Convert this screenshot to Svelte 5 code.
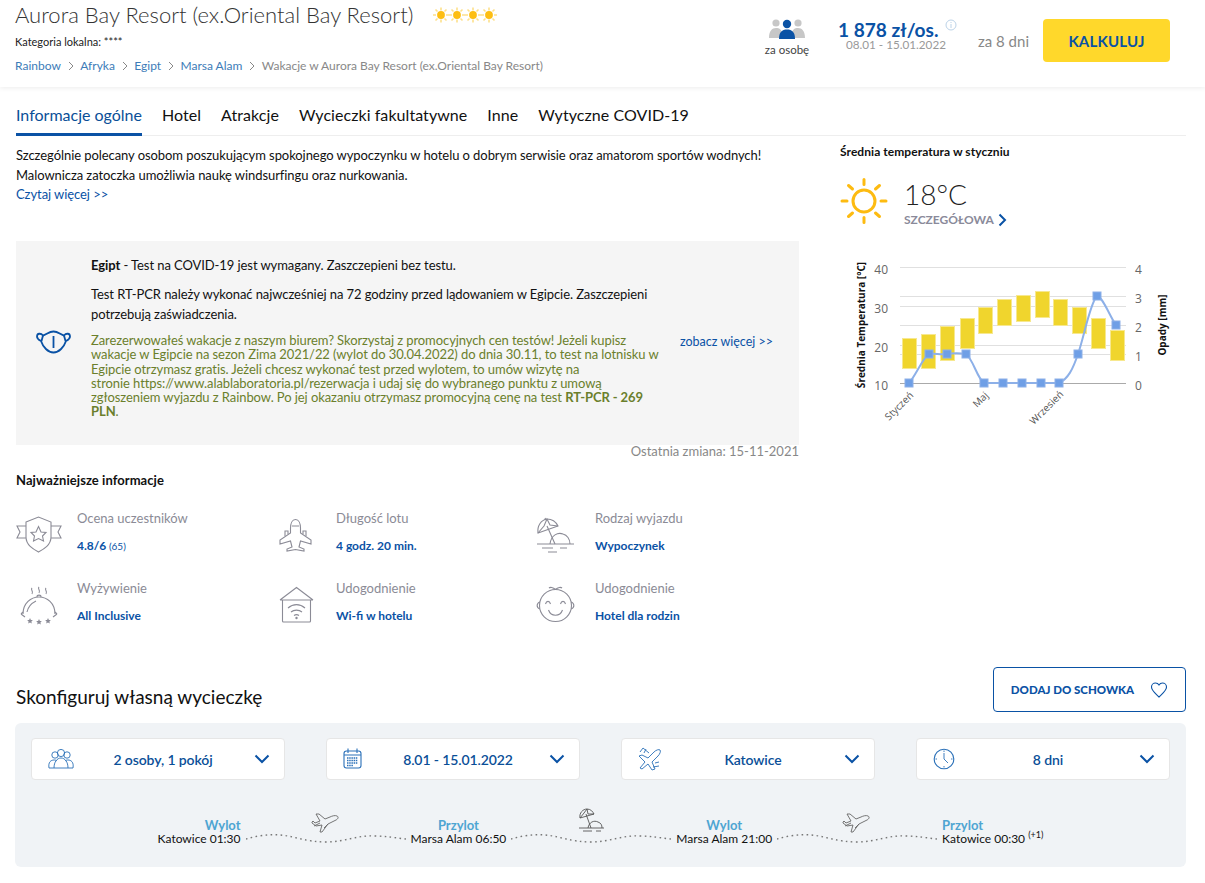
<script>
    const tabs = ['Informacje ogólne', 'Hotel', 'Atrakcje', 'Wycieczki fakultatywne', 'Inne', 'Wytyczne COVID-19'];
    const crumbs = ['Rainbow', 'Afryka', 'Egipt', 'Marsa Alam'];

    const info = [
        { icon: 'shield', label: 'Ocena uczestników', value: '4.8/6', extra: '(65)' },
        { icon: 'plane', label: 'Długość lotu', value: '4 godz. 20 min.' },
        { icon: 'beach', label: 'Rodzaj wyjazdu', value: 'Wypoczynek' },
        { icon: 'food', label: 'Wyżywienie', value: 'All Inclusive' },
        { icon: 'wifi', label: 'Udogodnienie', value: 'Wi-fi w hotelu' },
        { icon: 'baby', label: 'Udogodnienie', value: 'Hotel dla rodzin' }
    ];

    const selects = [
        { icon: 'people', label: '2 osoby, 1 pokój' },
        { icon: 'calendar', label: '8.01 - 15.01.2022' },
        { icon: 'jet', label: 'Katowice' },
        { icon: 'clock', label: '8 dni' }
    ];

    // chart, in px of the svg
    const bars = [
        [62, 87, 117], [81, 83, 117], [100, 75, 109], [120, 67, 97], [138, 56, 82], [157, 48, 74],
        [176, 44, 70], [195, 40, 66], [213, 48, 74], [232, 56, 82], [251, 67, 97], [270, 79, 109]
    ];
    const rain = [
        [69, 132], [89, 103], [107, 103], [126, 103], [144, 132], [163, 132],
        [182, 132], [201, 132], [219, 132], [238, 103], [257, 45], [276, 74]
    ];
    const rainLine = 'M69 132 C76 124 82 108 89 103 C95 102 100 104 107 103 C113 102 120 102 126 103 C133 108 137 127 144 132 L219 132 C228 128 233 118 238 103 C244 86 250 52 257 45 C263 46 270 66 276 74';
</script>

{#snippet sun()}
    <svg class="star" viewBox="0 0 16 16" width="16" height="16">
        <path d="M8 .5v3M8 12.500v3M0 8h3M13 8h3M2.500 2.500l2 2M11.500 11.500l2 2M2.500 13.500l2-2M11.500 4.500l2-2" stroke="#fde08a" stroke-width="1.600" />
        <circle cx="8" cy="8" r="3.900" fill="#fdbe12" />
    </svg>
{/snippet}

{#snippet infoIcon(name)}
    <svg class="info-icon" viewBox="0 0 46 40" width="46" height="40" fill="none" stroke="#8b8b96" stroke-width="1.100">
        {#if name === 'shield'}
            <path d="M10 6 L22.500 1 L35 6 V21 C35 29 28 33 22.500 36 C17 33 10 29 10 21 Z" />
            <path d="M10 10 H1 L4 16 L1 22 L10 22 M35 10 H45 L42 16 L45 22 L35 22" />
            <path d="M22.500 10.500 L25 16 L30 16.500 L26.500 20 L27.500 25 L22.500 22.500 L17.500 25 L18.500 20 L15 16.500 L20 16 Z" />
        {:else if name === 'plane'}
            <path d="M20.500 3.500 C17 3.500 15.500 8 15.500 12 V17 L5 24 V28 L15.500 25 L17 31 L12 33 V35 L20.500 33.500 L29 35 V33 L24 31 L25.500 25 L36 28 V24 L25.500 17 V12 C25.500 8 24 3.500 20.500 3.500 Z" />
            <path d="M10 20 V15 H13 V18 M31 20 V15 H28 V18 M17 10 H24" />
        {:else if name === 'beach'}
            <path d="M3 28 H40 M8 32 H19 M26 32 H33 M14 36 H23" />
            <path d="M16 28 C17 19 24 16 29 18 C33 19 36 23 36 28" />
            <path d="M4 17 C3 10 7 4 13 3 C18 3 22 6 24 10 Z" />
            <path d="M4 17 L10 10 L13 3 L16 9 L24 10 M13 10 L21 28 M11 2 L12 4" />
        {:else if name === 'food'}
            <path d="M7 28 C7 17 15 11 23 11 C31 11 39 17 39 28" />
            <path d="M11 26 C12 21 16 17 20 15" />
            <path d="M21 11 C21 8.500 25 8.500 25 11 M5 28 L9 31 M5 28 L7 26 M41 28 L37 31 M41 28 L39 26" />
            <path d="M16 2 C14 4 18 5 16 8 M23 1 C21 3 25 4 23 7 M30 2 C28 4 32 5 30 8" />
            <g fill="#8b8b96" stroke="none">
                {#each [[14, 32], [23, 33], [32, 32]] as [x, y]}
                    <path d="M{x} {y}l.9 1.900 2 .2-1.500 1.400.4 2-1.800-1-1.800 1 .4-2-1.500-1.400 2-.2z" />
                {/each}
            </g>
        {:else if name === 'wifi'}
            <path d="M5 14 L21.500 1.500 L38 14 M5 14 H38" />
            <path d="M7.500 14 V35 C7.500 36 7.500 36 8.500 36 H34.500 C35.500 36 35.500 36 35.500 35 V14" />
            <path d="M13 22 C18 17.500 25 17.500 30 22 M16 26 C19 23.500 24 23.500 27 26 M19 29.500 C20.500 28.500 22.500 28.500 24 29.500" />
            <circle cx="21.500" cy="32" r="1.200" fill="#8b8b96" stroke="none" />
        {:else if name === 'baby'}
            <circle cx="21.500" cy="19.500" r="16" />
            <path d="M6 16 C2.500 17 2 21.500 5.800 23 M37 16 C40.500 17 41 21.500 37.200 23" />
            <path d="M21.500 3.500 C19 1 16 1 15 2 M21.500 3.500 C24 1 27 1 28 2" />
            <path d="M11.500 18 C12.500 14.500 15.500 14.500 16.500 18 M26.500 18 C27.500 14.500 30.500 14.500 31.500 18 M14.500 24 C17 31 26 31 28.500 24" />
        {/if}
    </svg>
{/snippet}

{#snippet selectIcon(name)}
    <svg class="select-icon" viewBox="0 0 28 24" width="28" height="24" fill="none" stroke="#2a70b8" stroke-width=".9">
        {#if name === 'people'}
            <circle cx="8" cy="8" r="3.200" /><circle cx="14" cy="6" r="3.600" /><circle cx="20" cy="8" r="3.200" />
            <path d="M2 21 C1 15 4 13 7 13 C8 13 9 13 10 14 M26 21 C27 15 24 13 21 13 C20 13 19 13 18 14" />
            <path d="M7 21 C7 15 10 11 14 11 C18 11 21 15 21 21 Z M2 21 H7 M21 21 H26" />
        {:else if name === 'calendar'}
            <rect x="2" y="4" width="17" height="17" rx="2.500" stroke-width="1.100" />
            <path d="M6 1.500 V6 M15 1.500 V6 M2 8 H19" stroke-width="1.100" />
            <path d="M5 11 H16 M5 13.500 H16 M5 16 H16 M5 18.500 H11" stroke-dasharray="1.500 .7" stroke-width="1.500" />
        {:else if name === 'jet'}
            <path d="M3 21 L8 15 L2 9 L5 8 L11 11 L17 5 C19 3 22 2 23 3 C24 4 23 7 21 9 L15 15 L18 22 L15 23 L11 17 L5 22 Z" />
            <path d="M7 6 L9 2 M3 5 L6 1 L12 6 M18 16 L22 15 M16 20 L22 19" />
        {:else if name === 'clock'}
            <circle cx="12" cy="12" r="9.800" stroke-width="1.100" />
            <path d="M12 6 V12 L16 16" />
            <path d="M12 3.500 V5 M12 19 V20.500 M3.500 12 H5 M19 12 H20.500" />
        {/if}
    </svg>
{/snippet}

{#snippet grayPlane()}
    <svg class="route-icon" viewBox="0 0 28 22" width="28" height="22" fill="none" stroke="#666" stroke-width=".9">
        <path d="M1 11 L5 14 L11 13 L9 20 L11 20 L17 12 L25 8 C27 7 28 5 26 4 C24 3 21 4 19 5 L14 7 L8 2 L5 2 L9 9 L4 11 L2 9 L1 10 Z" />
        <path d="M3 14 L9 11 M13 16 L17 12" />
    </svg>
{/snippet}

{#snippet wave()}
    <svg class="wave" viewBox="0 0 160 12" width="160" height="12" fill="none" stroke="#777" stroke-width="1.400" stroke-dasharray="1.600 3.400">
        <path d="M0 7 C10 4 22 2 34 3 C48 4 60 10 80 10 C98 10 112 3 128 4 C140 4 150 6 160 7" />
    </svg>
{/snippet}

{#snippet stop(title, place, align)}
    <div class="stop {align}">
        <b>{title}</b>
        <span>{place}</span>
    </div>
{/snippet}

<header class="top">
    <div class="top-left">
        <div class="title-row">
            <h1>Aurora Bay Resort (ex.Oriental Bay Resort)</h1>
            <div class="stars">
                {#each [1, 2, 3, 4] as _}
                    {@render sun()}
                {/each}
            </div>
        </div>
        <div class="local">Kategoria lokalna: ****</div>
        <nav class="crumbs">
            {#each crumbs as c}
                <a href="#top">{c}</a>
                <svg viewBox="0 0 8 10" width="8" height="10" fill="none" stroke="#888" stroke-width="1"><path d="M2 1l4 4-4 4" /></svg>
            {/each}
            <span>Wakacje w Aurora Bay Resort (ex.Oriental Bay Resort)</span>
        </nav>
    </div>
    <div class="per-person">
        <svg viewBox="0 0 36 20" width="36" height="20">
            <g fill="#c7c7c7">
                <circle cx="7" cy="4" r="3.600" /><circle cx="29" cy="4" r="3.600" />
                <path d="M0 19 C0 12 3 9 7 9 C10 9 14 10 14 19 Z M22 19 C22 10 26 9 29 9 C33 9 36 12 36 19 Z" />
            </g>
            <g fill="#0a52a5">
                <circle cx="18" cy="5" r="4.200" />
                <path d="M10 20 C10 13 13 10.500 18 10.500 C23 10.500 26 13 26 20 Z" />
            </g>
        </svg>
        <span>za osobę</span>
    </div>
    <div class="price">
        <strong>1 878 zł/os.</strong>
        <span>08.01 - 15.01.2022</span>
        <svg class="i" viewBox="0 0 12 12" width="12" height="12" fill="none" stroke="#bcd3e8"><circle cx="6" cy="6" r="5" /><path d="M6 5v4M6 3v1" /></svg>
    </div>
    <div class="days">za 8 dni</div>
    <button class="calc">KALKULUJ</button>
</header>

<main class="page">
    <div class="tabs">
        {#each tabs as t, i}
            <a href="#top" class="tab" class:active={i === 0}>{t}</a>
        {/each}
    </div>

    <div class="columns">
        <section class="left">
            <p class="intro">Szczególnie polecany osobom poszukującym spokojnego wypoczynku w hotelu o dobrym serwisie oraz amatorom sportów wodnych!<br />Malownicza zatoczka umożliwia naukę windsurfingu oraz nurkowania.<br /><a href="#top">Czytaj więcej &gt;&gt;</a></p>

            <div class="covid">
                <svg class="mask" viewBox="0 0 35 24" width="35" height="24" fill="none" stroke="#0a52a5" stroke-width="1.800">
                    <path d="M17.500 1.500 C13 1.500 10 5 7 5.500 C5 3 1 3 1 6.500 C1 9 3 10 5 11 C7 17 12 22.500 17.500 22.500 C23 22.500 28 17 30 11 C32 10 34 9 34 6.500 C34 3 30 3 28 5.500 C25 5 22 1.500 17.500 1.500 Z" />
                    <path d="M7 5.500 L5.500 11 M28 5.500 L29.500 11 M17.500 6 V18" />
                </svg>
                <div class="covid-text">
                    <p><b>Egipt</b> - Test na COVID-19 jest wymagany. Zaszczepieni bez testu.</p>
                    <p>Test RT-PCR należy wykonać najwcześniej na 72 godziny przed lądowaniem w Egipcie. Zaszczepieni potrzebują zaświadczenia.</p>
                    <p class="green">Zarezerwowałeś wakacje z naszym biurem? Skorzystaj z promocyjnych cen testów! Jeżeli kupisz wakacje w Egipcie na sezon Zima 2021/22 (wylot do 30.04.2022) do dnia 30.11, to test na lotnisku w Egipcie otrzymasz gratis. Jeżeli chcesz wykonać test przed wylotem, to umów wizytę na stronie&nbsp;https://www.alablaboratoria.pl/rezerwacja i udaj się do wybranego punktu z umową zgłoszeniem wyjazdu z Rainbow. Po jej okazaniu otrzymasz promocyjną cenę na test <b>RT-PCR - 269 PLN</b>.</p>
                </div>
                <a class="more" href="#top">zobacz więcej &gt;&gt;</a>
            </div>
            <div class="changed">Ostatnia zmiana: 15-11-2021</div>

            <h3>Najważniejsze informacje</h3>
            <div class="info-grid">
                {#each info as it}
                    <div class="info-item">
                        {@render infoIcon(it.icon)}
                        <div>
                            <div class="info-label">{it.label}</div>
                            <div class="info-value">{it.value}{#if it.extra}<small>&nbsp;{it.extra}</small>{/if}</div>
                        </div>
                    </div>
                {/each}
            </div>
        </section>

        <aside class="right">
            <h3>Średnia temperatura w styczniu</h3>
            <div class="weather">
                <svg viewBox="0 0 48 48" width="48" height="48" fill="none" stroke="#fdbb11" stroke-width="3" stroke-linecap="round">
                    <circle cx="24" cy="24" r="11" />
                    <path d="M24 2.500v5M24 40.500v5M2 24h5M41 24h5M8.500 8.500l4 3.500M35.500 36l4 3.500M8.500 39.500l4-3.500M35.500 12l4-3.500" />
                </svg>
                <div>
                    <div class="temp">18°C</div>
                    <div class="detail">SZCZEGÓŁOWA
                        <svg viewBox="0 0 9 14" width="9" height="14" fill="none" stroke="#0a52a5" stroke-width="2"><path d="M1.500 1.500L7 7l-5.500 5.500" /></svg>
                    </div>
                </div>
            </div>
            <svg class="chart" viewBox="0 0 340 190" width="340" height="190">
                <g stroke="#e0e0e0" stroke-width="1">
                    {#each [16, 45, 55, 74, 94, 103] as y}
                        <path d="M60 {y + .5}H286" />
                    {/each}
                </g>
                <path d="M60 132.500H286" stroke="#aaa" />
                {#each bars as [x, y, b]}
                    <rect x={x + .5} y={y + .5} width="14" height={b - y} fill="#f0d52d" stroke="#f7e88f" />
                {/each}
                <path d={rainLine} fill="none" stroke="#8db0e8" stroke-width="2" />
                {#each rain as [x, y]}
                    <rect x={x - 4} y={y - 4} width="8" height="8" fill="#6f9fe6" stroke="#8db0e8" />
                {/each}
                <g class="tick" text-anchor="end">
                    <text x="48" y="23">40</text><text x="48" y="62">30</text><text x="48" y="101">20</text><text x="48" y="139">10</text>
                </g>
                <g class="tick">
                    <text x="295" y="23">4</text><text x="295" y="52">3</text><text x="295" y="81">2</text><text x="295" y="110">1</text><text x="295" y="139">0</text>
                </g>
                <text class="axis" transform="translate(25 74) rotate(-90)" text-anchor="middle">Średnia Temperatura [°C]</text>
                <text class="axis" transform="translate(326 74) rotate(-90)" text-anchor="middle">Opady [mm]</text>
                <g class="month" text-anchor="end">
                    <text transform="translate(74 145) rotate(-45)">Styczeń</text>
                    <text transform="translate(149 145) rotate(-45)">Maj</text>
                    <text transform="translate(224 144) rotate(-45)">Wrzesień</text>
                </g>
            </svg>
        </aside>
    </div>

    <div class="config-head">
        <h2>Skonfiguruj własną wycieczkę</h2>
        <button class="save">DODAJ DO SCHOWKA
            <svg viewBox="0 0 18 16" width="18" height="16" fill="none" stroke="#0a52a5" stroke-width="1.100"><path d="M9 15 C5 11 1.500 8.500 1.500 5 C1.500 2.500 3.500 1 5.500 1 C7 1 8.300 1.800 9 3 C9.700 1.800 11 1 12.500 1 C14.500 1 16.500 2.500 16.500 5 C16.500 8.500 13 11 9 15 Z" /></svg>
        </button>
    </div>

    <section class="panel">
        <div class="selects">
            {#each selects as s}
                <div class="select">
                    {@render selectIcon(s.icon)}
                    <span>{s.label}</span>
                    <svg viewBox="0 0 16 10" width="16" height="10" fill="none" stroke="#0a52a5" stroke-width="2"><path d="M1.500 1.500L8 8l6.500-6.500" /></svg>
                </div>
            {/each}
        </div>
        <div class="route">
            {@render stop('Wylot', 'Katowice 01:30', 'end')}
            <div class="leg">{@render wave()}{@render grayPlane()}</div>
            {@render stop('Przylot', 'Marsa Alam 06:50', 'mid')}
            <div class="leg">{@render wave()}
                <svg class="route-icon beach" viewBox="0 0 30 26" width="30" height="26" fill="none" stroke="#555" stroke-width=".9">
                    <path d="M3 21H28M7 24H16M20 24H25" />
                    <path d="M12 21C13 15 18 13 22 15C25 16 26 18 26 21" />
                    <path d="M4 11C3 6 7 2 11 2C15 2 17 5 18 7ZM4 11L8 6L11 2L12 7L18 7M10 7L15 21" />
                </svg>
            </div>
            {@render stop('Wylot', 'Marsa Alam 21:00', 'mid')}
            <div class="leg">{@render wave()}{@render grayPlane()}</div>
            <div class="stop">
                <b>Przylot</b>
                <span>Katowice 00:30 <sup>(+1)</sup></span>
            </div>
        </div>
    </section>
</main>

<style>
    :global(body) {
        margin: 0;
        background: #fff;
        font-family: Lato, 'Liberation Sans', sans-serif;
        color: #111;
    }

    a {
        text-decoration: none;
    }

    .top {
        display: flex;
        align-items: flex-start;
        height: 87px;
        padding: 0 35px 0 15px;
        box-shadow: 0 1px 5px rgba(0, 0, 0, 0.08);
        box-sizing: border-box;
    }

    .top-left {
        flex: 1;
    }

    .title-row {
        display: flex;
        align-items: center;
        height: 29px;
    }

    h1 {
        margin: 0;
        font-size: 22px;
        font-weight: 300;
        color: #333;
    }

    .stars {
        display: flex;
        margin-left: 20px;
    }

    .local {
        font-size: 11px;
        margin-top: 6px;
        color: #222;
    }

    .crumbs {
        display: flex;
        align-items: center;
        gap: 5.700px;
        margin-top: 10px;
        font-size: 12px;
    }

    .crumbs a {
        color: #3d7cb8;
    }

    .crumbs span {
        color: #888;
    }

    .per-person {
        display: flex;
        flex-direction: column;
        align-items: center;
        margin-top: 19px;
        width: 46px;
        font-size: 11.500px;
        white-space: nowrap;
        color: #444;
    }

    .per-person span {
        margin-top: 4px;
    }

    .price {
        position: relative;
        display: flex;
        flex-direction: column;
        margin: 19px 0 0 28px;
        width: 115px;
    }

    .price strong {
        font-size: 19.100px;
        line-height: 21px;
        color: #0a52a5;
    }

    .price span {
        margin: -2px 0 0 8px;
        font-size: 11.700px;
        line-height: 13px;
        color: #999;
    }

    .price .i {
        position: absolute;
        left: 107px;
        top: 0;
    }

    .days {
        margin: 32px 14px 0 25px;
        font-size: 15px;
        color: #888;
        white-space: nowrap;
    }

    .calc {
        margin-top: 19px;
        width: 127px;
        height: 43px;
        border: 0;
        border-radius: 4px;
        background: #ffd82b;
        color: #0a52a5;
        font: 700 15px Lato, sans-serif;
        letter-spacing: 0.2px;
    }

    .page {
        padding: 13px 19px 0 16px;
    }

    .tabs {
        display: flex;
        gap: 20px;
        height: 36px;
        border-bottom: 1px solid #eee;
        box-sizing: border-box;
    }

    .tab {
        height: 36px;
        box-sizing: border-box;
        padding-top: 5px;
        font-size: 16px;
        letter-spacing: 0.06px;
        color: #111;
    }

    .tab.active {
        color: #0a4f98;
        border-bottom: 3px solid #0a52a5;
        letter-spacing: 0;
    }

    .columns {
        display: grid;
        grid-template-columns: 783px 1fr;
        gap: 41px;
        margin-top: 9px;
    }

    .intro {
        margin: 0;
        font-size: 13px;
        line-height: 20px;
        letter-spacing: -0.07px;
    }

    .intro a {
        position: relative;
        top: -1px;
        color: #0a52a5;
    }

    .covid {
        display: flex;
        align-items: center;
        height: 204px;
        margin-top: 36px;
        background: #f5f5f5;
    }

    .mask {
        flex: none;
        margin: 0 0 2px 20px;
    }

    .covid-text {
        align-self: flex-start;
        flex: none;
        width: 570px;
        margin-left: 20px;
        padding-top: 14px;
        font-size: 13px;
        letter-spacing: -0.08px;
    }

    .covid-text p {
        margin: 0 0 9px;
        line-height: 20px;
    }

    .covid-text p.green {
        margin: 0;
        line-height: 14.250px;
        color: #6b7f2c;
    }

    .more {
        margin: 0 0 0 19px;
        position: relative;
        top: -2px;
        font-size: 12.500px;
        color: #0a52a5;
        white-space: nowrap;
    }

    .changed {
        text-align: right;
        font-size: 13px;
        line-height: 13px;
        color: #888;
    }

    h3 {
        margin: 14px 0 0;
        font-size: 13px;
        font-weight: 700;
        letter-spacing: 0.06px;
        color: #111;
    }

    .info-grid {
        display: grid;
        grid-template-columns: repeat(3, 259px);
        grid-auto-rows: 70px;
        margin-top: 22px;
    }

    .info-item {
        display: flex;
        gap: 15px;
    }

    .info-icon {
        margin-top: 6px;
    }

    .info-label {
        font-size: 13px;
        line-height: 16px;
        color: #8b8b96;
    }

    .info-value {
        margin-top: 12px;
        font-size: 12px;
        font-weight: 700;
        color: #0a52a5;
    }

    .info-value small {
        font-size: 10px;
        font-weight: 400;
    }

    .right h3 {
        margin: -1px 0 0;
        font-size: 12px;
    }

    .weather {
        display: flex;
        gap: 16px;
        margin-top: 18px;
    }

    .temp {
        margin-top: 1px;
        font-size: 28px;
        font-weight: 300;
        line-height: 32px;
        color: #222;
    }

    .detail {
        display: flex;
        align-items: center;
        gap: 4px;
        margin-top: 2px;
        font-size: 12px;
        font-weight: 700;
        color: #8a8a9a;
    }

    .chart {
        display: block;
        margin-top: 24px;
    }

    .tick text {
        font: 12px 'Open Sans', sans-serif;
        fill: #666;
    }

    .axis {
        font: 700 10px 'Open Sans', sans-serif;
        fill: #111;
    }

    .month text {
        font: 10px 'Open Sans', sans-serif;
        fill: #555;
    }

    .config-head {
        display: flex;
        align-items: center;
        justify-content: space-between;
        margin-top: 17px;
    }

    h2 {
        margin: 14px 0 0;
        font-size: 19px;
        font-weight: 400;
        color: #111;
    }

    .save {
        display: flex;
        align-items: center;
        justify-content: center;
        gap: 16px;
        width: 193px;
        height: 45px;
        background: #fff;
        border: 1px solid #0a52a5;
        border-radius: 4px;
        color: #0a52a5;
        font: 900 11.500px Lato, sans-serif;
    }

    .panel {
        margin: 11px 0 0 -1px;
        height: 144px;
        padding: 15px 16px 0;
        box-sizing: border-box;
        background: #f0f3f6;
        border-radius: 6px;
    }

    .selects {
        display: grid;
        grid-template-columns: repeat(4, 254px);
        gap: 41px;
    }

    .select {
        display: flex;
        align-items: center;
        height: 42px;
        padding: 0 14px 0 15px;
        background: #fff;
        border: 1px solid #e6e6e6;
        border-radius: 4px;
        box-sizing: border-box;
    }

    .select span {
        flex: 1;
        padding-right: 3px;
        text-align: center;
        font-size: 14px;
        font-weight: 600;
        letter-spacing: -0.1px;
        color: #0a4f98;
    }

    .route {
        display: flex;
        justify-content: center;
        align-items: flex-end;
        gap: 5px;
        margin-top: 38px;
    }

    .stop {
        display: flex;
        flex-direction: column;
        font-size: 12px;
        line-height: 14px;
        color: #111;
    }

    .stop b {
        font-size: 13px;
        color: #4ea5d2;
    }

    .stop.end {
        text-align: right;
    }

    .stop.mid {
        text-align: center;
    }

    .stop sup {
        font-size: 9px;
        line-height: 0;
    }

    .leg {
        position: relative;
        width: 160px;
        height: 14px;
    }

    .wave {
        display: block;
    }

    .route-icon {
        position: absolute;
        left: 65px;
        top: -20px;
    }

    .route-icon.beach {
        top: -25px;
    }
</style>
